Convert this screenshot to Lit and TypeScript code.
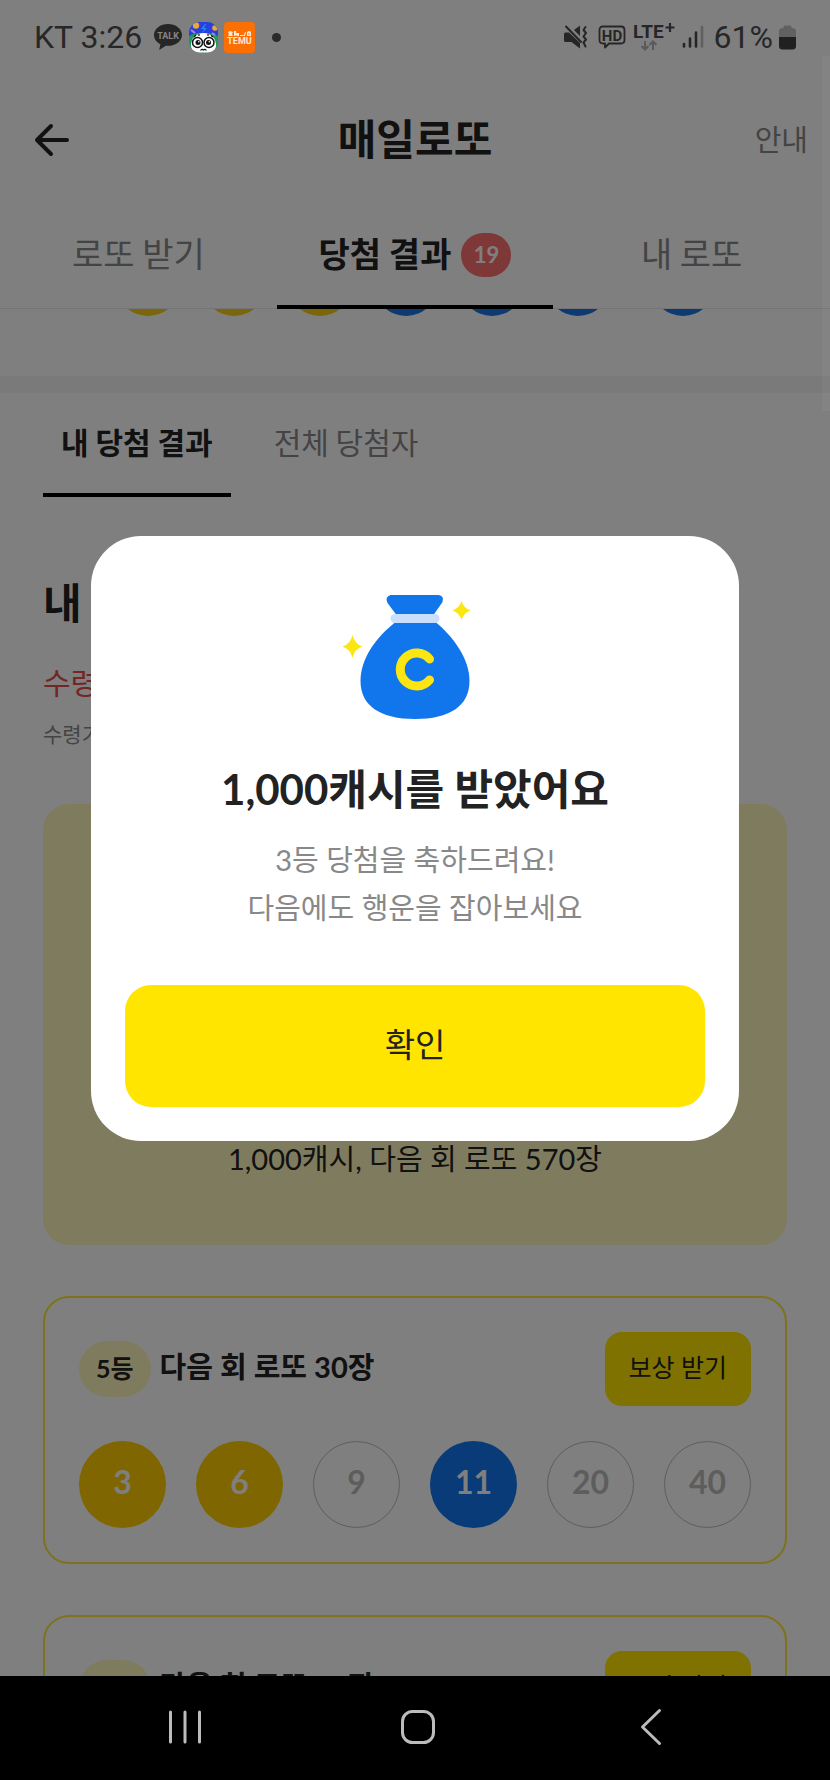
import { LitElement, html, css } from "lit";
import { customElement, property } from "lit/decorators.js";
import { classMap } from "lit/directives/class-map.js";

type Tone = "yellow" | "blue" | "miss";
interface Ball { n: number; tone: Tone; }

const DRAWN: Tone[] = ["yellow", "yellow", "yellow", "blue", "blue", "blue", "blue"];
const ROW: Ball[] = [
  { n: 3, tone: "yellow" },
  { n: 6, tone: "yellow" },
  { n: 9, tone: "miss" },
  { n: 11, tone: "blue" },
  { n: 20, tone: "miss" },
  { n: 40, tone: "miss" },
];

const base = css`
  *, *::before, *::after { box-sizing: border-box; }
  h1, h2, p { margin: 0; font-weight: 400; }
  button { border: 0; padding: 0; background: none; font: inherit; color: inherit; cursor: pointer; }
  svg { display: block; }
`;

@customElement("status-bar")
class StatusBar extends LitElement {
  static styles = [base, css`
    :host {
      display: flex; align-items: center; justify-content: space-between;
      height: 74px; padding: 0 34px; color: #272727;
      font: 400 32px/40px Roboto, "Noto Sans", sans-serif;
    }
    .side { display: flex; align-items: center; }
    .talk { margin-left: 12px; }
    .face { margin-left: 6px; }
    .temu { margin-left: 5px; }
    .dot { width: 9px; height: 9px; border-radius: 50%; background: #2a2a2a; margin-left: 17px; }
    .hd { margin-left: 10px; }
    .lte { margin-left: 7px; }
    .signal { margin: 0 10px 0 7px; }
    .battery { margin-left: 6px; }
    .mini { font-family: Roboto, sans-serif; font-weight: 700; }
  `];
  render() {
    return html`
      <div class="side">
        <span>KT 3:26</span>
        <svg class="talk" width="28" height="28" viewBox="0 0 28 28">
          <path fill="#262626" d="M14 1C6.300 1 0 5.900 0 12c0 4 2.600 7.400 6.400 9.300L5.200 27l6.600-4.300c.7.1 1.500.1 2.200.1 7.700 0 14-4.900 14-10.900S21.700 1 14 1z"/>
          <text class="mini" x="14" y="15.500" text-anchor="middle" font-size="9" fill="#858585">TALK</text>
        </svg>
        <svg class="face" width="31" height="31" viewBox="0 0 31 31">
          <defs><clipPath id="c"><rect x="1" y="0" width="29" height="30.500" rx="11"/></clipPath></defs>
          <g clip-path="url(#c)">
            <rect width="31" height="31" fill="#1d9a5e"/>
            <ellipse cx="15.500" cy="23" rx="12.500" ry="12" fill="#fff"/>
            <path d="M0 15V0h31v15c-4-3.500-9-4-15.500-4S4 11.500 0 15z" fill="#2b3fe0"/>
            <circle cx="8" cy="3.500" r="3.200" fill="#eda63c"/>
            <circle cx="27" cy="6" r="2.800" fill="#eda63c"/>
            <path d="M17 2l-4 5h3l-2 4 5-5h-3l2-4z" fill="#1b8fe8"/>
            <path d="M3 8l4 3M24 11l3 2" stroke="#a58ad8" stroke-width="2"/>
          </g>
          <g fill="#fff" stroke="#111" stroke-width="1.500">
            <circle cx="9.500" cy="20.500" r="5"/><circle cx="21" cy="20.500" r="5"/>
          </g>
          <circle cx="10" cy="20.500" r="2.500" fill="#111"/><circle cx="20.500" cy="20.500" r="2.500" fill="#111"/>
          <circle cx="10.800" cy="19.700" r=".8" fill="#fff"/><circle cx="21.300" cy="19.700" r=".8" fill="#fff"/>
          <path d="M6 15l2-2M11 14V12M20 14v-2M23 13.500l2 1.500M12.500 28.500q1.500-2 3-.5q1.500-1.500 3 .5" fill="none" stroke="#111" stroke-width="1.200"/>
        </svg>
        <svg class="temu" width="31" height="31" viewBox="0 0 31 31">
          <rect width="31" height="31" rx="4" fill="#fb6f05"/>
          <g fill="#ffe9d6">
            <path d="M4 14l1-2-1-2 2-1 3 1-1 2 1 2zM10 9h2v2h3v3h-2l-1-1-1 1h-1zM16 13h4l1-3 1 .5-1 3.500h-5z"/>
            <path d="M23 10q2.500-2 4 0v4h-4zm1.200 1.500v1h1.600v-1z" fill-rule="evenodd"/>
          </g>
          <text class="mini" x="15.500" y="22" text-anchor="middle" font-size="9" fill="#ffe9d6">TEMU</text>
        </svg>
        <span class="dot"></span>
      </div>
      <div class="side">
        <svg width="24" height="24" viewBox="0 0 24 24">
          <path d="M0 9q0-1.500 1.500-1.500H5L16 18v5.500L7.500 17h-6Q0 17 0 15.500zM10 5l6-4.500V11z" fill="#262626"/>
          <path d="M2 1.500L17 17" stroke="#262626" stroke-width="2" stroke-linecap="round"/>
          <path d="M21.500 2l-2 3 2.500 3-2.500 3.500 2.500 3-2.500 3 2 4" fill="none" stroke="#262626" stroke-width="2" stroke-linejoin="round" stroke-linecap="round"/>
        </svg>
        <svg class="hd" width="28" height="24" viewBox="0 0 28 24">
          <path d="M5 1.500h18q3.500 0 3.500 3.500v10q0 3.500-3.500 3.500H11l-4 4v-4H5q-3.500 0-3.500-3.500V5q0-3.500 3.500-3.500z" fill="none" stroke="#262626" stroke-width="1.800" stroke-linejoin="round"/>
          <text class="mini" x="14" y="15.500" text-anchor="middle" font-size="15" fill="#262626">HD</text>
        </svg>
        <svg class="lte" width="42" height="28" viewBox="0 0 42 28">
          <text class="mini" x="0" y="15" font-size="19" fill="#262626">LTE</text>
          <path d="M37 0v9M32.500 4.500h9" stroke="#262626" stroke-width="2.200"/>
          <path d="M12 18v8M8.500 23l3.500 3.500 3.500-3.500M20 27v-8M16.500 22l3.500-3.500 3.500 3.500" fill="none" stroke="#5a5a5a" stroke-width="2"/>
        </svg>
        <svg class="signal" width="22" height="24" viewBox="0 0 22 24" stroke-width="2.600" stroke-linecap="round">
          <path d="M2 19v2.500M8 13.500v8M14 7.500v14" stroke="#262626"/>
          <path d="M20 2v19.500" stroke="#606060"/>
        </svg>
        <span>61%</span>
        <svg class="battery" width="17" height="25" viewBox="0 0 17 25">
          <path d="M4.500 3V2q0-1.500 1.500-1.500h5q1.500 0 1.500 1.500v1Q17 3 17 6v6H0V6q0-3 4.500-3z" fill="#616161"/>
          <path d="M0 12h17v9q0 3.500-3.500 3.500h-10Q0 24.500 0 21z" fill="#202020"/>
        </svg>
      </div>`;
  }
}

@customElement("reward-card")
class RewardCard extends LitElement {
  @property() grade = "";
  @property() prize = "";
  @property({ attribute: false }) balls: Ball[] = [];
  static styles = [base, css`
    :host {
      display: flex; flex-direction: column; gap: 35px;
      padding: 34px; border: 2px solid #fbe53a; border-radius: 26px;
    }
    .head { display: flex; align-items: center; gap: 9px; }
    .grade {
      padding: 0 17px 2px; border-radius: 28px; background: #fff7be;
      font-size: 25px; line-height: 54px; font-weight: 700;
    }
    .prize { flex: 1; padding-bottom: 4px; font-size: 29px; line-height: 40px; font-weight: 700; }
    .claim {
      padding: 0 24px 4px; height: 74px; border-radius: 17px; background: #ffe500;
      font-size: 25px; line-height: 36px;
    }
    .balls { display: flex; justify-content: space-between; }
    .ball {
      width: 87px; height: 87px; border-radius: 50%;
      display: flex; align-items: center; justify-content: center;
      font-size: 32px; line-height: 40px; font-weight: 700; color: #fff; padding-bottom: 6px;
    }
    .yellow { background: #fc0; }
    .blue { background: #1277f2; }
    .miss { border: 1px solid #bbb; color: #bbb; }
  `];
  render() {
    return html`
      <div class="head">
        <span class="grade">${this.grade}</span>
        <span class="prize">${this.prize}</span>
        <button class="claim" type="button">보상 받기</button>
      </div>
      <div class="balls">
        ${this.balls.map((b) => html`<span class=${classMap({ ball: true, [b.tone]: true })}>${b.n}</span>`)}
      </div>`;
  }
}

@customElement("app-root")
class AppRoot extends LitElement {
  static styles = [base, css`
    :host {
      display: flex; flex-direction: column; height: 100vh; overflow: hidden;
      background: #fff; color: #222;
      font-family: Lato, "Noto Sans CJK KR", sans-serif;
    }
    .screen { flex: 1; min-height: 0; position: relative; display: flex; flex-direction: column; }
    status-bar { position: relative; z-index: 2; flex: none; }

    .native { font-family: "Noto Sans CJK KR", sans-serif; }
    .header {
      flex: none; height: 132px; padding: 0 22px;
      display: grid; grid-template-columns: 1fr auto 1fr; align-items: center;
    }
    .back { justify-self: start; padding-left: 12px; }
    .header h1 { padding-bottom: 6px; font-size: 42px; line-height: 60px; font-weight: 700; }
    .guide { justify-self: end; padding-bottom: 4px; font-size: 29px; line-height: 40px; color: #888; }

    .tabs { flex: none; display: flex; height: 103px; border-bottom: 1px solid #e8e8e8; }
    .tab {
      flex: 1; display: flex; align-items: center; justify-content: center; gap: 10px;
      height: 103px; padding-bottom: 2px; border-bottom: 4px solid transparent;
      font-size: 34px; line-height: 48px; color: #888;
    }
    .tab.on { color: #222; font-weight: 700; border-color: #000; }
    .label { padding-bottom: 4px; }
    .count {
      width: 50px; border-radius: 22px; background: #fd7070; color: #fff;
      font: 700 22px/44px Lato, sans-serif;
    }

    .content { flex: 1; min-height: 0; overflow: hidden; }
    .drawn { display: flex; justify-content: center; gap: 22px; margin-top: -57px; padding-bottom: 60px; }
    .dot { width: 64px; height: 64px; border-radius: 50%; }
    .dot:last-child { margin-left: 19px; }
    .dot.yellow { background: #f7cc18; }
    .dot.blue { background: #1b74e2; }
    .band { height: 17px; background: #f5f5f5; }

    .subtabs { display: flex; gap: 25px; padding: 0 43px; }
    .subtab {
      height: 104px; padding: 0 18px 4px; border-bottom: 4px solid transparent;
      font-size: 30px; line-height: 44px; color: #888;
    }
    .subtab.on { color: #222; font-weight: 700; border-color: #000; }

    .results { padding: 76px 43px 0; }
    .results h2 { font-size: 42px; line-height: 60px; font-weight: 700; }
    .warn { margin-top: 29px; font-size: 30px; line-height: 40px; color: #e84a4a; }
    .note { margin-top: 16px; font-size: 21px; line-height: 32px; color: #888; }
    .summary {
      margin-top: 54px; min-height: 441px; padding: 66px 34px; border-radius: 26px;
      background: #fff7be; display: flex; align-items: flex-end; justify-content: center;
      font-size: 29px; line-height: 40px;
    }
    .cards { display: grid; gap: 51px; margin-top: 51px; }

    .scrim {
      position: absolute; inset: 0; z-index: 1; background: rgba(0, 0, 0, .5);
      display: flex; align-items: center; justify-content: center; padding: 0 91px;
    }
    .thumb {
      position: absolute; right: 0; top: 56px; width: 8px; height: 355px;
      background: rgba(255, 255, 255, .03);
    }
    .dialog {
      flex: 1; padding: 58px 34px 34px; border-radius: 50px; background: #fff;
      text-align: center;
    }
    .bag { margin: 0 auto; }
    .dialog h2 { margin-top: 39px; font-size: 42px; line-height: 60px; font-weight: 700; }
    .dialog p { margin-top: 17px; font-size: 29px; line-height: 48px; color: #888; }
    .ok {
      display: block; width: 100%; height: 122px; margin-top: 53px; padding-bottom: 4px; border-radius: 26px;
      background: #ffe500; font-size: 33px; line-height: 48px;
    }

    .nav {
      flex: none; height: 104px; padding: 0 62px 2px 68px; background: #000;
      display: flex; align-items: stretch;
    }
    .nav button { flex: 1; display: flex; align-items: center; justify-content: center; }
    .nav svg { fill: none; stroke: #bcbcbc; stroke-width: 3; stroke-linecap: round; stroke-linejoin: round; }
  `];

  render() {
    return html`
      <div class="screen">
        <status-bar></status-bar>
        <header class="header native">
          <button class="back" type="button" aria-label="back">
            <svg width="36" height="34" viewBox="0 0 36 34" fill="none" stroke="#222" stroke-width="4" stroke-linecap="round" stroke-linejoin="round">
              <path d="M17 3L3 17l14 14M3 17h30"/>
            </svg>
          </button>
          <h1>매일로또</h1>
          <button class="guide" type="button">안내</button>
        </header>
        <nav class="tabs native">
          <button class="tab" type="button"><span class="label">로또 받기</span></button>
          <button class="tab on" type="button"><span class="label">당첨 결과</span><span class="count">19</span></button>
          <button class="tab" type="button"><span class="label">내 로또</span></button>
        </nav>
        <main class="content">
          <div class="drawn">
            ${DRAWN.map((t) => html`<span class=${classMap({ dot: true, [t]: true })}></span>`)}
          </div>
          <div class="band"></div>
          <div class="subtabs native">
            <button class="subtab on" type="button">내 당첨 결과</button>
            <button class="subtab" type="button">전체 당첨자</button>
          </div>
          <section class="results">
            <h2>내</h2>
            <p class="warn">수령</p>
            <p class="note">수령기</p>
            <div class="summary">1,000캐시, 다음 회 로또 570장</div>
            <div class="cards">
              <reward-card grade="5등" prize="다음 회 로또 30장" .balls=${ROW}></reward-card>
              <reward-card grade="5등" prize="다음 회 로또 30장" .balls=${ROW}></reward-card>
            </div>
          </section>
        </main>
        <div class="scrim">
          <div class="thumb"></div>
          <div class="dialog" role="dialog" aria-modal="true" aria-labelledby="won">
            <svg class="bag" width="144" height="126" viewBox="343.500 594 144 126">
              <path d="M391 595h48q6 1 4 7l-9 13h-37l-9-12q-3-6 3-8z" fill="#1176ec"/>
              <path d="M396 622h40c17 14 34 36 34 59 0 25-20 38-54.500 38S361 706 361 681c0-23 16-44 35-59z" fill="#1176ec"/>
              <rect x="391" y="614" width="49" height="9" rx="4.500" fill="#c9dffb"/>
              <path d="M430 659a16.500 16.500 0 1 0 0 21" fill="none" stroke="#fbe611" stroke-width="9" stroke-linecap="round"/>
              <path d="M353 635q2 9 10 11.500-8 2.500-10 11.500-2-9-10-11.500 8-2.500 10-11.500zM462 601q2 7 9 9.500-7 2.500-9 9.500-2-7-9-9.500 7-2.500 9-9.500z" fill="#fbe611"/>
            </svg>
            <h2 id="won">1,000캐시를 받았어요</h2>
            <p>3등 당첨을 축하드려요!<br>다음에도 행운을 잡아보세요</p>
            <button class="ok" type="button">확인</button>
          </div>
        </div>
      </div>
      <nav class="nav">
        <button type="button" aria-label="recent apps">
          <svg width="34" height="36" viewBox="0 0 34 36"><path d="M2.500 3v30M17 3v30M31.500 3v30"/></svg>
        </button>
        <button type="button" aria-label="home">
          <svg width="36" height="36" viewBox="0 0 36 36"><rect x="2.500" y="2.500" width="31" height="31" rx="10"/></svg>
        </button>
        <button type="button" aria-label="back">
          <svg width="22" height="38" viewBox="0 0 22 38"><path d="M19.500 2.500L2.500 19l17 16.500"/></svg>
        </button>
      </nav>`;
  }
}
